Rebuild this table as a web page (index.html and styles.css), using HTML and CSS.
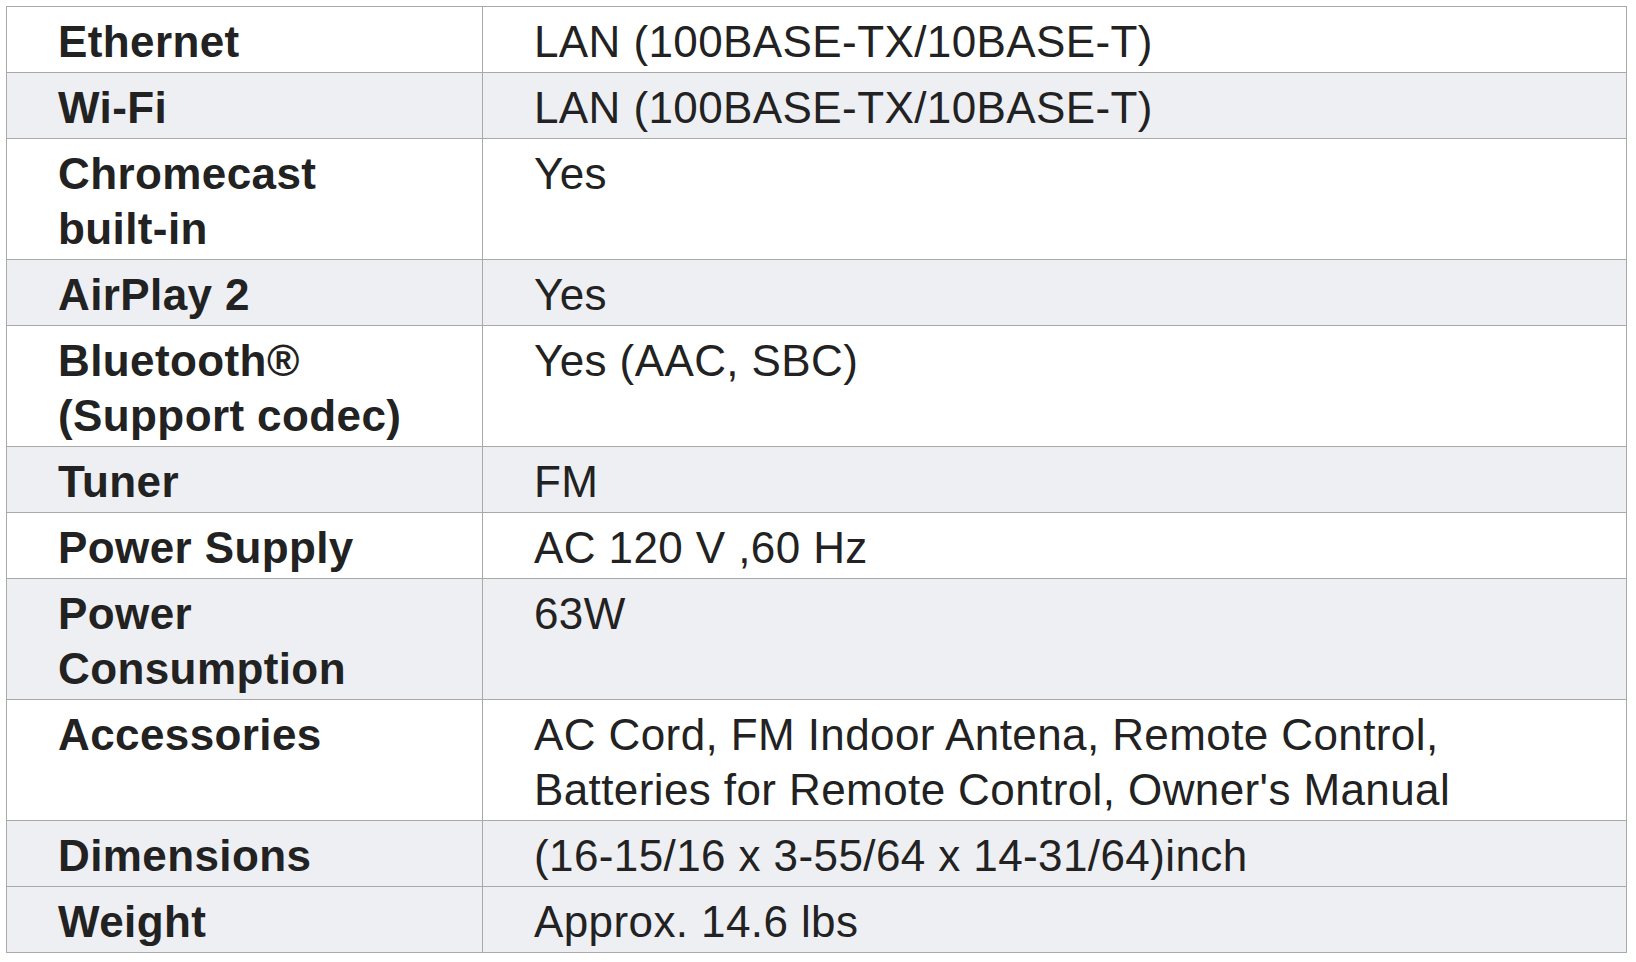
FILE: index.html
```html
<!DOCTYPE html>
<html>
<head>
<meta charset="utf-8">
<link rel="stylesheet" href="styles.css">
</head>
<body>
<div class="wrap">
<table class="spec">
<colgroup><col class="c1"><col class="c2"></colgroup>
<tbody>
<tr><th>Ethernet</th><td>LAN (100BASE-TX/10BASE-T)</td></tr>
<tr class="alt"><th>Wi-Fi</th><td>LAN (100BASE-TX/10BASE-T)</td></tr>
<tr><th>Chromecast<br>built-in</th><td>Yes</td></tr>
<tr class="alt"><th>AirPlay 2</th><td>Yes</td></tr>
<tr><th>Bluetooth®<br>(Support codec)</th><td>Yes (AAC, SBC)</td></tr>
<tr class="alt"><th>Tuner</th><td>FM</td></tr>
<tr><th>Power Supply</th><td>AC 120 V ,60 Hz</td></tr>
<tr class="alt"><th>Power<br>Consumption</th><td>63W</td></tr>
<tr><th>Accessories</th><td>AC Cord, FM Indoor Antena, Remote Control,<br>Batteries for Remote Control, Owner's Manual</td></tr>
<tr class="alt"><th>Dimensions</th><td>(16-15/16 x 3-55/64 x 14-31/64)inch</td></tr>
<tr class="alt"><th>Weight</th><td>Approx. 14.6 lbs</td></tr>
</tbody>
</table>
</div>
</body>
</html>
```

FILE: styles.css
```css
html, body {
  margin: 0;
  padding: 0;
  background: #ffffff;
}
.wrap {
  padding: 6px 0 0 6px;
}
.spec {
  border-collapse: collapse;
  width: 1621px;
  table-layout: fixed;
  font-family: "Liberation Sans", Arial, Helvetica, sans-serif;
  font-size: 44px;
  letter-spacing: 0.4px;
  line-height: 55px;
  color: #222222;
}
.c1 { width: 476px; }
.spec th, .spec td {
  border: 1px solid #a9a9a9;
  padding: 7px 10px 3px 51px;
  text-align: left;
  vertical-align: top;
}
.spec th {
  font-weight: bold;
}
.spec td {
  font-weight: normal;
}
.spec tr.alt th, .spec tr.alt td {
  background: #eeeff3;
}
```
